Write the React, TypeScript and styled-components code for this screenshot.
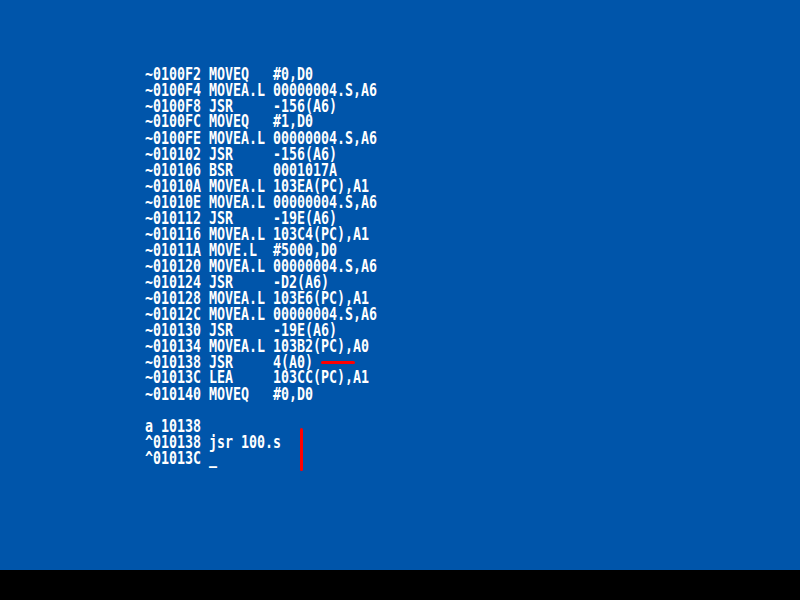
import React from "react";
import styled, { createGlobalStyle } from "styled-components";

const Global = createGlobalStyle`
  html, body { margin: 0; padding: 0; background: #000; }
  #root { width: 800px; height: 600px; }
`;

const Frame = styled.div`
  width: 800px;
  height: 600px;
  display: flex;
  flex-direction: column;
  background: #000;
`;

const Screen = styled.div`
  position: relative;
  height: 570px;
  background: #0055aa;
  padding: 67px 0 0 145px;
  box-sizing: border-box;
  overflow: hidden;
`;

const Listing = styled.pre`
  margin: 0;
  color: #ffffff;
  font-family: "DejaVu Sans Mono", "Liberation Mono", monospace;
  font-weight: bold;
  font-size: 16px;
  line-height: 14.815px;
  white-space: pre;
  transform: scale(0.8307, 1.08);
  transform-origin: left top;
`;

const Mark = styled.div<{ $vertical?: boolean }>`
  position: absolute;
  background: #ff0000;
  border-radius: 2px;
  ${(p) =>
    p.$vertical
      ? `left: 300px; top: 428px; width: 3px; height: 43px;`
      : `left: 321px; top: 361px; width: 34px; height: 3px;`}
`;

const lines = [
  "~0100F2 MOVEQ   #0,D0",
  "~0100F4 MOVEA.L 00000004.S,A6",
  "~0100F8 JSR     -156(A6)",
  "~0100FC MOVEQ   #1,D0",
  "~0100FE MOVEA.L 00000004.S,A6",
  "~010102 JSR     -156(A6)",
  "~010106 BSR     0001017A",
  "~01010A MOVEA.L 103EA(PC),A1",
  "~01010E MOVEA.L 00000004.S,A6",
  "~010112 JSR     -19E(A6)",
  "~010116 MOVEA.L 103C4(PC),A1",
  "~01011A MOVE.L  #5000,D0",
  "~010120 MOVEA.L 00000004.S,A6",
  "~010124 JSR     -D2(A6)",
  "~010128 MOVEA.L 103E6(PC),A1",
  "~01012C MOVEA.L 00000004.S,A6",
  "~010130 JSR     -19E(A6)",
  "~010134 MOVEA.L 103B2(PC),A0",
  "~010138 JSR     4(A0)",
  "~01013C LEA     103CC(PC),A1",
  "~010140 MOVEQ   #0,D0",
  "",
  "a 10138",
  "^010138 jsr 100.s",
  "^01013C _",
];

export default function App() {
  return (
    <Frame>
      <Global />
      <Screen>
        <Listing>{lines.join("\n")}</Listing>
        <Mark />
        <Mark $vertical />
      </Screen>
    </Frame>
  );
}
